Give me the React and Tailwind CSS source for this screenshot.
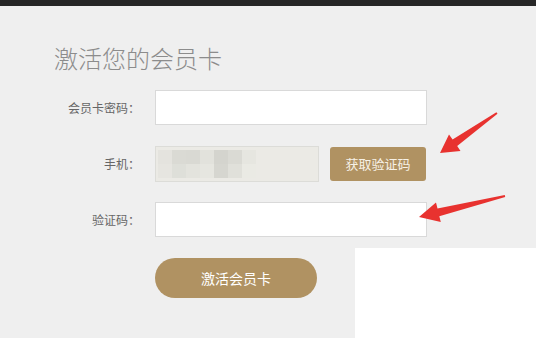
import React from 'react';

const font = { fontFamily: '"Noto Sans CJK SC", "Liberation Sans", sans-serif' };

// pixelated blur that hides the phone number
const blurCells = [
    ['#e4e3de', '#dadad4', '#d9d9d3', '#e2e2dc', '#d4d4ce', '#dadad4', '#e6e6e0'],
    ['#e6e5e0', '#dedfd9', '#e3e3dd', '#e6e6e0', '#d6d6d0', '#e0e0da', '#eaeae4'],
];

const Arrows = () => (
    <svg className="absolute inset-0 pointer-events-none" width="536" height="338" viewBox="0 0 536 338">
        <polygon points="440,153 449,134.5 452.6,139.5 496.4,112.2 497.5,113.8 457.2,146.1 460.5,151.1" fill="#e8322f" />
        <polygon points="419,217 436,202.6 437.5,208.4 504.8,195 505.2,197 439.3,216.2 440.8,222" fill="#e8322f" />
    </svg>
);

const Row = ({ label, children }) => (
    <div className="flex items-center h-[35px]">
        <div className="w-[140px] text-right text-[12px] text-[#666]">{label}</div>
        <div className="ml-[15px] flex items-center h-full">{children}</div>
    </div>
);

export default function App() {
    return (
        <div className="relative w-[536px] h-[338px] overflow-hidden bg-[#efefef]" style={font}>
            <div className="h-[6px] bg-[#262626]" />

            <h1 className="mt-[36px] ml-[54px] text-[24px] leading-[32px] font-light text-[#8c8c8c]">激活您的会员卡</h1>

            <div className="mt-[16px] flex flex-col gap-[21px]">
                <Row label="会员卡密码：">
                    <div className="w-[272px] h-[35px] bg-white border border-[#d9d9d9]" />
                </Row>
                <Row label="手机：">
                    <div className="w-[164px] h-[36px] bg-[#ebeae5] border border-[#dcdcd8] flex flex-col justify-center pl-[2px]">
                        {blurCells.map((row, i) => (
                            <div key={i} className="flex">
                                {row.map((c, j) => (
                                    <div key={j} className="w-[14px] h-[14px]" style={{ background: c }} />
                                ))}
                            </div>
                        ))}
                    </div>
                    <button className="ml-[11px] w-[96px] h-[34px] rounded-[3px] bg-[#b09262] text-[13px] text-[#f7f1e6]">获取验证码</button>
                </Row>
                <Row label="验证码：">
                    <div className="w-[272px] h-[35px] bg-white border border-[#d9d9d9]" />
                </Row>
                <div className="ml-[155px]">
                    <button className="w-[162px] h-[40px] rounded-full bg-[#b09262] text-[14px] text-white">激活会员卡</button>
                </div>
            </div>

            <div className="absolute left-[355px] top-[248px] w-[181px] h-[90px] bg-white" />
            <Arrows />
        </div>
    );
}
